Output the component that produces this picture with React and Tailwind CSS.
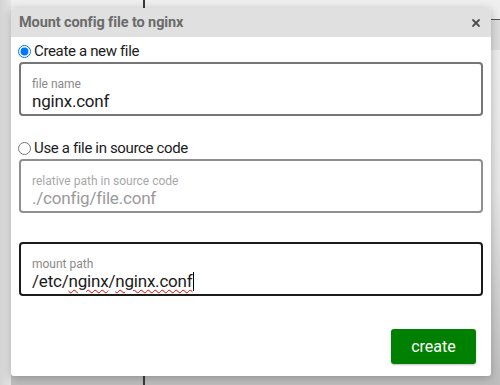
import { X } from 'lucide-react'

const font = { fontFamily: 'Roboto, "Liberation Sans", sans-serif' }

function Field({ label, children, tone = 'normal' }) {
  const border = {
    normal: 'border-[#767676]',
    disabled: 'border-[#8f8f8f]',
    focus: 'border-[#1b1b1b]',
  }[tone]
  return (
    <div className={`flex flex-col h-[54px] border-2 ${border} rounded-[4px] px-[11px] pt-[13px]`}>
      <span className={`text-[12px] leading-[14px] ${tone === 'disabled' ? 'text-[#a8a8a8]' : 'text-[#8a8a8a]'}`}>{label}</span>
      <div className={`text-[17px] leading-[20px] tracking-[-0.2px] ${tone === 'disabled' ? 'text-[#9a9a9a]' : 'text-[#1b1b1b]'}`}>
        {children}
      </div>
    </div>
  )
}

function Radio({ checked, label }) {
  return (
    <label className="flex items-center h-[21px] gap-[3px] text-[15px] text-[#1b1b1b] tracking-[-0.35px]">
      <input type="radio" name="src" defaultChecked={checked} className="m-0 -ml-[1px] w-[13px] h-[13px] accent-[#0075ff]" />
      <span>{label}</span>
    </label>
  )
}

export default function App() {
  return (
    <div style={font} className="relative w-[500px] h-[385px] overflow-hidden bg-gradient-to-b from-[#efefef] via-[#e6e6e6] to-[#bdbdbd]">
      {/* page behind the overlay */}
      <div className="absolute left-[143px] top-0 w-[2px] h-full bg-[#3a3a3a]" />
      <div className="absolute right-0 top-[19px] w-[20px] h-[31px] border-t border-[#555] bg-[#dcdcdc]" />
      <div className="absolute left-0 top-0 w-[11px] h-full bg-gradient-to-r from-[#d4d4d4] to-[#e4e4e4]" />

      {/* dialog */}
      <div className="absolute left-[11px] top-[8px] w-[480px] h-[368px] bg-white rounded-[3px] shadow-[0_2px_10px_rgba(0,0,0,0.25)] flex flex-col overflow-hidden">
        <div className="flex items-center justify-between h-[29px] bg-[#e0e0e0] pl-[8px] pr-[9px]">
          <span className="text-[14.5px] font-bold text-[#6b6b6b] tracking-[-0.1px]">Mount config file to nginx</span>
          <X size={12} strokeWidth={3.6} className="text-[#505050]" />
        </div>

        <div className="flex flex-col flex-1 px-[8px] pt-[4px]">
          <Radio checked label="Create a new file" />
          <Field label="file name">nginx.conf</Field>

          <div className="mt-[22px]">
            <Radio label="Use a file in source code" />
          </div>
          <Field label="relative path in source code" tone="disabled">./config/file.conf</Field>

          <div className="mt-[29px]">
            <Field label="mount path" tone="focus">
              <span className="inline-flex items-center">
                /etc/
                <span className="underline decoration-wavy decoration-[#e00] decoration-1 underline-offset-2">nginx</span>
                /
                <span className="underline decoration-wavy decoration-[#e00] decoration-1 underline-offset-2">nginx.conf</span>
                <span className="w-px h-[19px] bg-black" />
              </span>
            </Field>
          </div>

          <div className="flex justify-end mt-[33px] pr-[7px]">
            <button className="w-[85px] h-[35px] rounded-[3px] bg-[#008000] text-white text-[16px] shadow-[0_1px_2px_rgba(0,0,0,0.25)]">
              create
            </button>
          </div>
        </div>
      </div>
    </div>
  )
}
